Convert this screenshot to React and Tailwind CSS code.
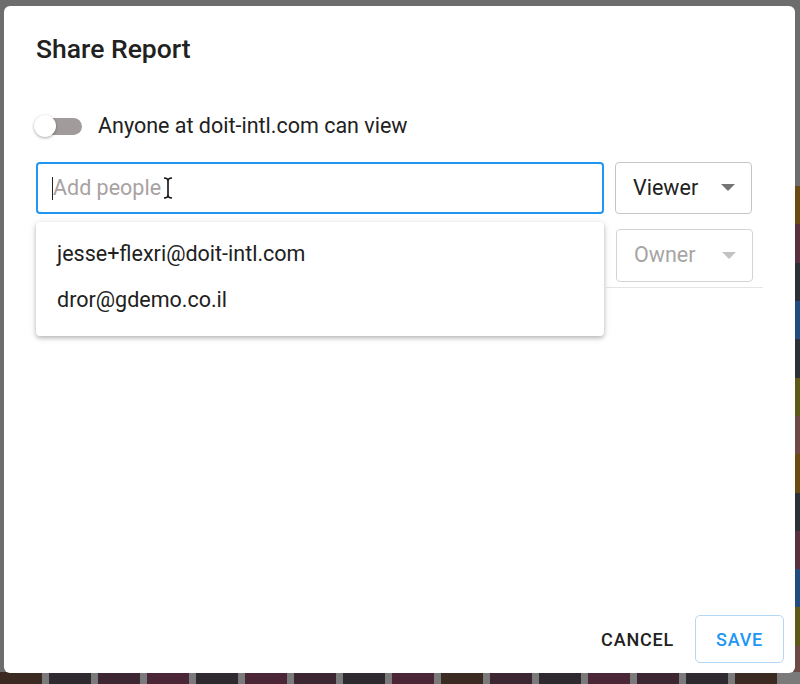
import React from 'react'

const stripes = ['#6b4a12', '#5a2f40', '#2b3136', '#1f4d80', '#2b3136', '#5c5a16', '#6e4a44', '#6b4a12', '#2b3136', '#5a2f40', '#1f4d80', '#5c5a16', '#6e4a44']
const bottomTiles = ['#3a2a22', '#2f2a30', '#3c2631', '#4a2636', '#2f2a30', '#4a2636', '#3c2631', '#2f2a30', '#4a2636', '#3a2a22', '#3c2631', '#2f2a30', '#4a2636', '#3c2631', '#2f2a30', '#3a2a22']

const Caret = ({ muted }) => (
  <svg width="14" height="8" viewBox="0 0 14 8" className="shrink-0">
    <path d="M0 0 L14 0 L7 7 Z" fill={muted ? '#c2c2c2' : '#757575'} />
  </svg>
)

const IBeam = () => (
  <svg width="10" height="22" viewBox="0 0 10 22" className="ml-[2px] shrink-0">
    <path d="M1 1 Q5 1 5 4 L5 18 Q5 21 1 21 M9 1 Q5 1 5 4 M5 18 Q5 21 9 21" stroke="#111" strokeWidth="1.6" fill="none" />
  </svg>
)

export default function App() {
  return (
    <div className="relative w-[800px] h-[684px] overflow-hidden bg-[#6d6d6d]" style={{ fontFamily: 'Roboto, "Liberation Sans", sans-serif' }}>
      {/* dimmed page behind the modal */}
      <div className="absolute right-0 top-[186px] bottom-0 w-[10px] flex flex-col">
        {stripes.map((c, i) => <div key={i} className="flex-1" style={{ background: c }} />)}
      </div>
      <div className="absolute left-0 right-0 bottom-0 h-[12px] flex gap-[7px] bg-[#7a7a7a]">
        {bottomTiles.map((c, i) => <div key={i} className="w-[42px] shrink-0" style={{ background: c }} />)}
      </div>

      {/* dialog */}
      <div className="absolute left-[4px] top-[6px] w-[791px] h-[667px] bg-white rounded-[6px] flex flex-col">
        <h2 className="pl-[32px] pt-[27px] text-[26.5px] leading-[32px] font-medium text-[#212121]">Share Report</h2>

        <div className="pl-[32px] pr-[32px] pt-[41px] flex-1">
          <div className="flex items-center h-[40px] -ml-[2px]">
            <div className="relative w-[48px] h-[22px] flex items-center">
              <div className="ml-[4px] w-[44px] h-[17px] rounded-full bg-[#a19b9b]" />
              <div className="absolute left-0 w-[22px] h-[22px] rounded-full bg-white shadow-[0_1px_3px_rgba(0,0,0,0.35)]" />
            </div>
            <span className="ml-[16px] text-[21.5px] text-[#212121]">Anyone at doit-intl.com can view</span>
          </div>

          <div className="mt-[16px] flex gap-[11px] pr-[11px]">
            <div className="relative flex-1">
              <div className="h-[52px] rounded-[4px] border-2 border-[#2196f3] flex items-center pl-[14px]">
                <div className="w-[1px] h-[23px] bg-[#222]" />
                <span className="text-[21.5px] text-[#a8a2a2]">Add people</span>
                <IBeam />
              </div>
              <div className="absolute left-0 right-0 top-[60px] bg-white rounded-[4px] shadow-[0_2px_4px_rgba(0,0,0,0.25),0_1px_10px_rgba(0,0,0,0.08)] pt-[9px] pb-[13px] z-10">
                <div className="h-[46px] flex items-center px-[21px] text-[21.5px] text-[#212121]">jesse+flexri@doit-intl.com</div>
                <div className="h-[46px] flex items-center px-[21px] text-[21.5px] text-[#212121]">dror@gdemo.co.il</div>
              </div>
            </div>
            <div className="w-[137px] h-[52px] rounded-[4px] border border-[#c8c4c4] flex items-center justify-between pl-[17px] pr-[16px]">
              <span className="text-[21.5px] text-[#212121]">Viewer</span>
              <Caret />
            </div>
          </div>

          <div className="mt-[15px] flex justify-end">
            <div className="w-[157px] border-b border-[#e4e4e4] pb-[5px]">
              <div className="ml-[10px] w-[137px] h-[53px] rounded-[4px] border border-[#d4d2d6] flex items-center justify-between pl-[17px] pr-[16px]">
                <span className="text-[21.5px] text-[#a8a4a4]">Owner</span>
                <Caret muted />
              </div>
            </div>
          </div>
        </div>

        <div className="flex justify-end items-center gap-[21px] pr-[11px] pb-[10px]">
          <button className="text-[18px] font-medium tracking-[0.8px] text-[#212121] uppercase">Cancel</button>
          <button className="w-[89px] h-[48px] rounded-[5px] border border-[#b3d7f7] text-[18px] font-medium tracking-[0.8px] text-[#2196f3] uppercase">Save</button>
        </div>
      </div>
    </div>
  )
}
